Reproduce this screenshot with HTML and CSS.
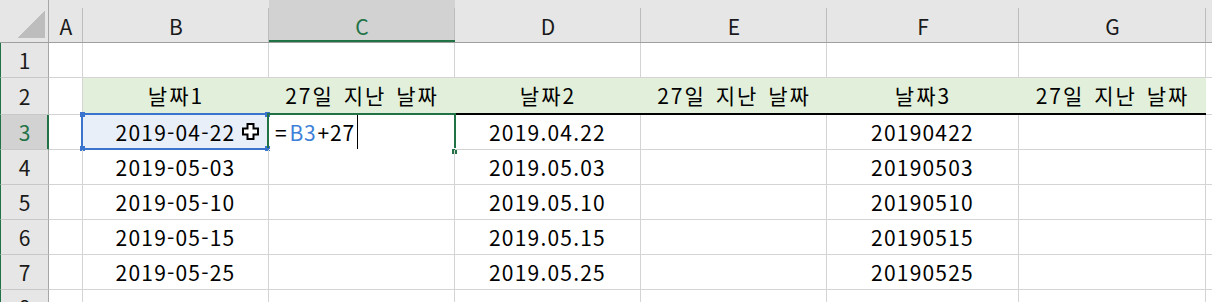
FILE: index.html
```html
<!DOCTYPE html>
<html lang="ko">
<head>
  <meta charset="UTF-8" />
  <title>날짜 계산</title>
  <link rel="stylesheet" href="styles.css">
</head>
<body>

<div class="sheet">
  <div class="row head">
    <div class="c rh corner"><span class="tri"></span></div>
    <div class="c ch">A</div>
    <div class="c ch">B</div>
    <div class="c ch on">C</div>
    <div class="c ch">D</div>
    <div class="c ch">E</div>
    <div class="c ch">F</div>
    <div class="c ch">G</div>
    <div class="c ch end"></div>
  </div>

  <div class="row r35">
    <div class="c rh">1</div>
    <div class="c"></div><div class="c"></div><div class="c"></div><div class="c"></div>
    <div class="c"></div><div class="c"></div><div class="c"></div><div class="c end"></div>
  </div>

  <div class="row r37">
    <div class="c rh">2</div>
    <div class="c"></div>
    <div class="c title">날짜1</div>
    <div class="c title">27일 지난 날짜</div>
    <div class="c title">날짜2</div>
    <div class="c title">27일 지난 날짜</div>
    <div class="c title">날짜3</div>
    <div class="c title">27일 지난 날짜</div>
    <div class="c end"></div>
  </div>

  <div class="row r35">
    <div class="c rh on">3</div>
    <div class="c"></div>
    <div class="c ref">2019-04-22
      <span class="refbox"><i class="h tl"></i><i class="h tr"></i><i class="h bl"></i><i class="h br"></i></span>
      <svg class="pointer" width="17" height="17" viewBox="0 0 17 17">
        <path d="M5.5 1h6v4.5H16v6h-4.5V16h-6v-4.5H1v-6h4.5z" fill="#fff" stroke="#000" stroke-width="2" stroke-linejoin="miter"/>
      </svg>
    </div>
    <div class="c edit"><span class="eq">=</span><span class="b3">B3</span>+27<span class="caret"></span>
      <span class="activebox"><i class="fill"></i></span>
    </div>
    <div class="c">2019.04.22</div>
    <div class="c"></div>
    <div class="c">20190422</div>
    <div class="c"></div>
    <div class="c end"></div>
  </div>

  <div class="row r35">
    <div class="c rh">4</div>
    <div class="c"></div>
    <div class="c">2019-05-03</div>
    <div class="c"></div>
    <div class="c">2019.05.03</div>
    <div class="c"></div>
    <div class="c">20190503</div>
    <div class="c"></div>
    <div class="c end"></div>
  </div>

  <div class="row r35">
    <div class="c rh">5</div>
    <div class="c"></div>
    <div class="c">2019-05-10</div>
    <div class="c"></div>
    <div class="c">2019.05.10</div>
    <div class="c"></div>
    <div class="c">20190510</div>
    <div class="c"></div>
    <div class="c end"></div>
  </div>

  <div class="row r35">
    <div class="c rh">6</div>
    <div class="c"></div>
    <div class="c">2019-05-15</div>
    <div class="c"></div>
    <div class="c">2019.05.15</div>
    <div class="c"></div>
    <div class="c">20190515</div>
    <div class="c"></div>
    <div class="c end"></div>
  </div>

  <div class="row r35">
    <div class="c rh">7</div>
    <div class="c"></div>
    <div class="c">2019-05-25</div>
    <div class="c"></div>
    <div class="c">2019.05.25</div>
    <div class="c"></div>
    <div class="c">20190525</div>
    <div class="c"></div>
    <div class="c end"></div>
  </div>

  <div class="row r35">
    <div class="c rh">8</div>
    <div class="c"></div><div class="c"></div><div class="c"></div><div class="c"></div>
    <div class="c"></div><div class="c"></div><div class="c"></div><div class="c end"></div>
  </div>
</div>

</body>
</html>
```

FILE: styles.css
```css
body {
  margin: 0;
  background: #fff;
  font-family: "Noto Sans CJK KR", "Noto Sans", sans-serif;
  color: #000;
  overflow: hidden;
}

.sheet {
  width: 1212px;
  height: 302px;
  overflow: hidden;
}

.row {
  display: grid;
  grid-template-columns: 49px 34px 186px 186px 186px 186px 192px 187px 6px;
}

.head { height: 43px; }
.r35 { height: 35px; }
.r37 { height: 37px; }

.c {
  box-sizing: border-box;
  position: relative;
  display: flex;
  align-items: center;
  justify-content: center;
  border-right: 1px solid #d4d4d4;
  border-bottom: 1px solid #d4d4d4;
  font-size: 21px;
  letter-spacing: 1.2px;
  white-space: nowrap;
}

.c.end { border-right: none; }

/* column headers */
.ch {
  background: #e6e6e6 linear-gradient(#bcbcbc, #bcbcbc) no-repeat right 8px / 1px calc(100% - 8px);
  border-right: none;
  border-bottom: 1px solid #9f9f9f;
  font-size: 21px;
  letter-spacing: 0;
  padding-top: 9px;
  color: #1a1a1a;
}

.ch.end { background: #e6e6e6; }

.ch.on {
  background: #d2d2d2 linear-gradient(#bcbcbc, #bcbcbc) no-repeat right 8px / 1px calc(100% - 8px);
  color: #217346;
  box-shadow: inset 0 -2px 0 #217346;
}

/* row headers */
.rh {
  background: #e6e6e6;
  border-left: 1px solid #217346;
  border-right: 1px solid #a6a6a6;
  border-bottom: 1px solid #c8c8c8;
  font-size: 21px;
  letter-spacing: 0;
  color: #1a1a1a;
}

.rh.on {
  background: #d2d2d2;
  color: #217346;
  box-shadow: inset -1px 0 0 #217346;
  border-right-color: #217346;
}

.corner {
  border-bottom: 1px solid #9f9f9f;
  border-left: none;
  padding-left: 1px;
}

.tri {
  position: absolute;
  right: 3px;
  bottom: 4px;
  width: 27px;
  height: 27px;
  background: linear-gradient(to bottom right, transparent 50%, #bdbdbd 50%);
}

/* title row */
.title {
  background: #e2efda;
  border-right: none;
  border-bottom: 2px solid #000;
  padding-bottom: 1px;
  letter-spacing: 2px;
  word-spacing: 2px;
}

/* B3 reference highlight */
.ref {
  background: #e8eff9;
}

.refbox {
  position: absolute;
  top: -2px;
  left: -2px;
  right: -1px;
  bottom: -1px;
  border: 2px solid #3a74cc;
}

.refbox .h {
  position: absolute;
  width: 5px;
  height: 5px;
  background: #3a74cc;
}

.h.tl { top: -3px; left: -3px; }
.h.tr { top: -3px; right: -3px; }
.h.bl { bottom: -3px; left: -3px; }
.h.br { bottom: -3px; right: -3px; }

.pointer {
  position: absolute;
  left: 159px;
  top: 8px;
}

/* C3 active cell */
.edit {
  justify-content: flex-start;
  padding-left: 6px;
  letter-spacing: 0.8px;
  border-bottom-color: #fff;
}

.eq { margin-right: 2px; }

.b3 { color: #3d7fd9; margin-right: 1px; }

.caret {
  display: inline-block;
  width: 1px;
  height: 34px;
  background: #000;
  margin-left: 2px;
}

.activebox {
  position: absolute;
  top: -2px;
  left: -2px;
  right: -2px;
  bottom: 1px;
  border: 2px solid #217346;
  border-bottom: none;
}

.activebox .fill {
  position: absolute;
  right: -3px;
  bottom: -6px;
  width: 5px;
  height: 5px;
  background: #217346;
  border-left: 1px solid #fff;
  border-top: 1px solid #fff;
}
```
